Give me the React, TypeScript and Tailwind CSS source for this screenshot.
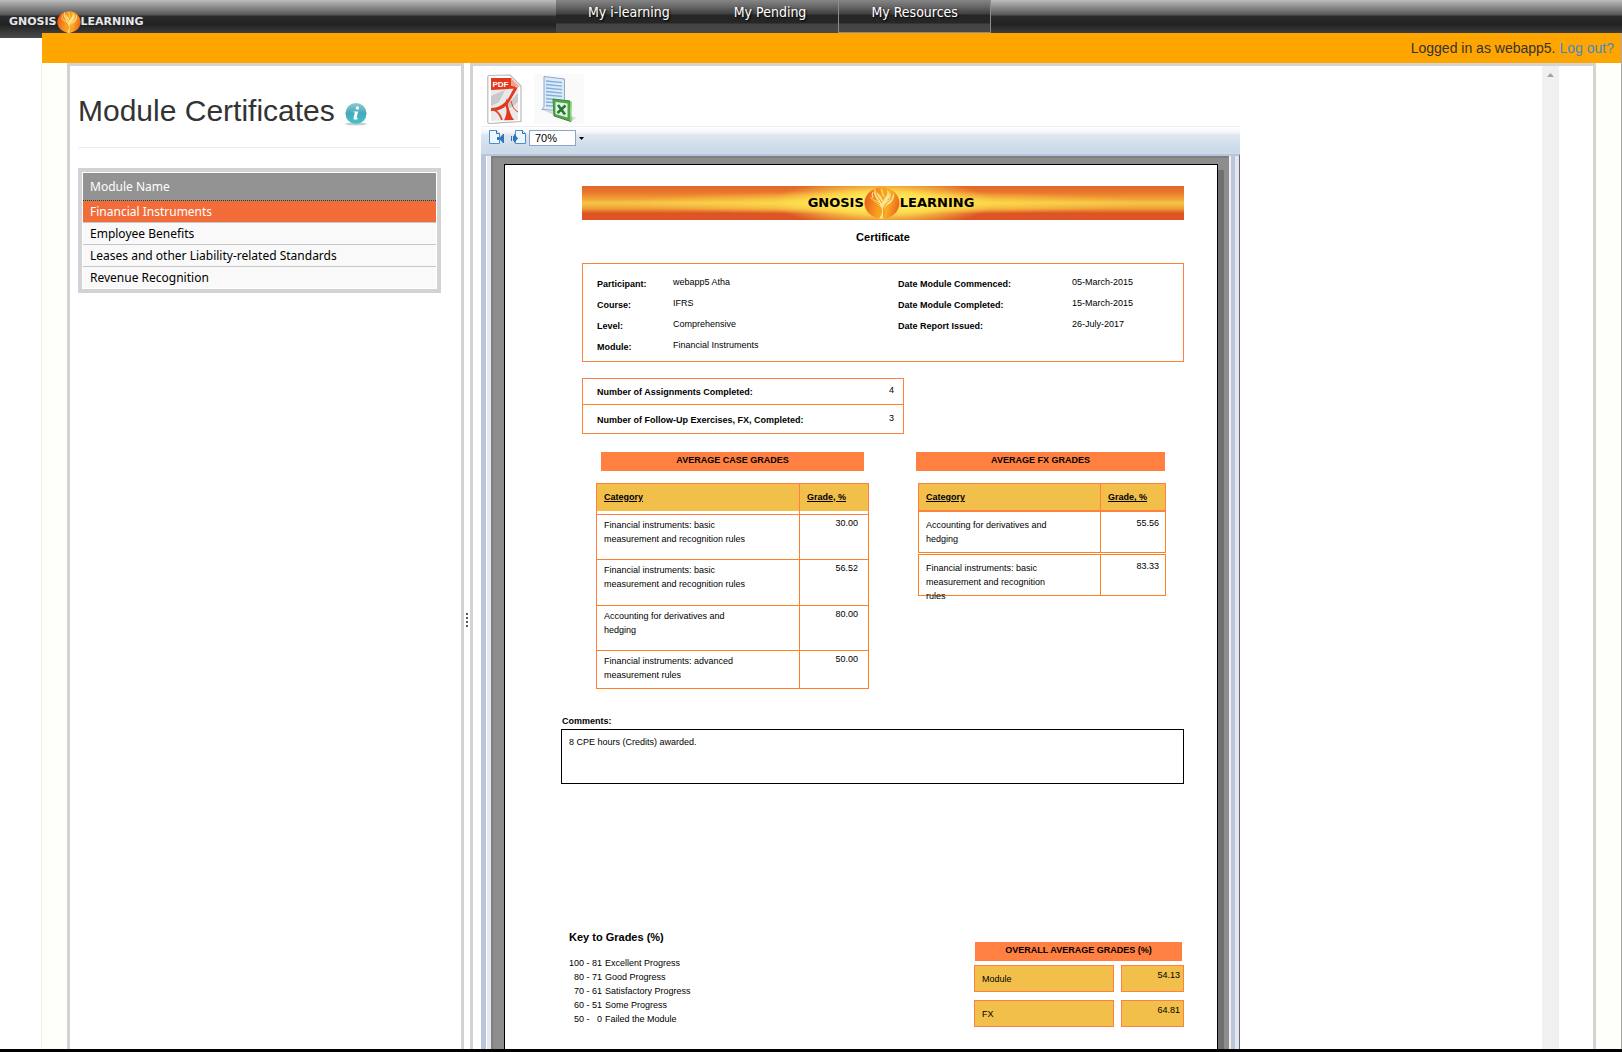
type Row = {
  name: string;
  grade: string;
  className: string;
};

const modules = [
  "Financial Instruments",
  "Employee Benefits",
  "Leases and other Liability-related Standards",
  "Revenue Recognition",
];

const tabs = [
  { name: "My i-learning", active: false },
  { name: "My Pending", active: false },
  { name: "My Resources", active: true },
];

const details = [
  ["Participant:", "webapp5 Atha"],
  ["Course:", "IFRS"],
  ["Level:", "Comprehensive"],
  ["Module:", "Financial Instruments"],
];

const dates = [
  ["Date Module Commenced:", "05-March-2015"],
  ["Date Module Completed:", "15-March-2015"],
  ["Date Report Issued:", "26-July-2017"],
];

const caseGrades: Row[] = [
  {
    name: "Financial instruments: basic measurement and recognition rules",
    grade: "30.00",
    className: "h-[45px]",
  },
  {
    name: "Financial instruments: basic measurement and recognition rules",
    grade: "56.52",
    className: "h-[46px]",
  },
  {
    name: "Accounting for derivatives and hedging",
    grade: "80.00",
    className: "h-[45px]",
  },
  {
    name: "Financial instruments: advanced measurement rules",
    grade: "50.00",
    className: "h-[38px]",
  },
];

const gradeKey = [
  ["100 - 81", "Excellent Progress"],
  ["80 - 71", "Good Progress"],
  ["70 - 61", "Satisfactory Progress"],
  ["60 - 51", "Some Progress"],
  ["50 -\u00a0\u00a0 0", "Failed the Module"],
];

const overall = [
  ["Module", "54.13"],
  ["FX", "64.81"],
];

function Flame({ className }: { className: string }) {
  return (
    <svg
      viewBox="0 0 36 32"
      preserveAspectRatio="none"
      aria-hidden="true"
      className={className}
    >
      <defs>
        <linearGradient id="ball" x1="0" y1="0.3" x2="1" y2="0.5">
          <stop offset="0" stopColor="#ec5a1c" />
          <stop offset="0.45" stopColor="#f7a01e" />
          <stop offset="0.7" stopColor="#f8ab22" />
          <stop offset="1" stopColor="#ee641d" />
        </linearGradient>
      </defs>
      <ellipse cx="18" cy="16" rx="17.5" ry="15.5" fill="url(#ball)" />
      <path
        d="M15 31.500c4-5 4-9 1-13-3-3-8-4-10-9 3 3 6 4 9 5-4-4-6-8-4-13 1 5 7 6 8 13 1-4 6-6 4-12 4 4 3 8 0 11 4-1 6-4 7-8 1 6-2 10-6 12-5 3-5 8-4 14Z"
        fill="#fbe58c"
      />
      <path
        d="M19 31c2-6-1-9 2-13 2-3 5-4 7-7M12 4c0 5 4 8 6 12M8 12c3 3 6 3 8 5"
        fill="none"
        stroke="#f0921c"
        strokeWidth="1"
      />
      <path
        d="M9 5c-1 2-1 4 0 6M17 2c2 3 1 5 3 8M26 6c1 2 0 4-1 6"
        fill="none"
        stroke="#fbd873"
        strokeWidth="1.300"
      />
    </svg>
  );
}

function InfoIcon() {
  return (
    <svg viewBox="0 0 24 24" aria-hidden="true" className="mt-[6px] h-6 w-6">
      <defs>
        <linearGradient id="info" x1="0" y1="0" x2="0" y2="1">
          <stop offset="0" stopColor="#8fc9d3" />
          <stop offset="0.5" stopColor="#46a9bb" />
          <stop offset="1" stopColor="#45c3cf" />
        </linearGradient>
      </defs>
      <ellipse cx="12" cy="22" rx="11" ry="1.4" fill="#c9cccc" />
      <circle cx="12" cy="11.5" r="10.5" fill="url(#info)" />
      <circle cx="13.4" cy="6" r="1.7" fill="#fff" />
      <path
        d="M9.6 9.4h4.6l-1.6 6.4c-.1.6.5.6 1.4.2l-.3 1c-2 1.200-4.600 1.100-4.200-.9l1.300-5.300c.1-.5-.5-.5-1.400-.5Z"
        fill="#fff"
      />
    </svg>
  );
}

function PdfIcon() {
  return (
    <svg viewBox="0 0 35 50" aria-hidden="true" className="h-[50px] w-[35px]">
      <path
        d="M2 1.500 23 1 34 12v35.500L2 49.500Q.8 49.500.8 48V3Q.8 1.500 2 1.500Z"
        fill="#fff"
        stroke="#b9b9b9"
        strokeWidth="1.200"
      />
      <path d="M4 15h27v31L4 47Z" fill="#e9e9e9" />
      <path d="M4 4h20.500v5L30 14.500 4 16Z" fill="#e2391c" />
      <path d="M24 4 33 13l-9-1Z" fill="#f3a08c" />
      <path d="M21 30 31 19v9l-8 6ZM4 22l14-6-6 12-8 4Z" fill="#c9c9c9" />
      <path
        d="M4 34c7 0 12-3 17-9l6-11 4-1-7 12c-5 9-11 12-20 12Z"
        fill="#e2391c"
      />
      <path d="M20 24c1 9 3 17 7 22l-10 .3c2-4 4-9 1-16Z" fill="#e2391c" />
      <path
        d="M4 35c5 .5 9 5 11 11"
        fill="none"
        stroke="#d94a35"
        strokeWidth="1.800"
      />
      <path d="M24 27c2 8 4 9 7 11" fill="none" stroke="#e2391c" />
      <text
        x="5.500"
        y="12.500"
        fill="#fff"
        className="font-['Liberation_Sans'] text-[8px] font-bold"
      >
        PDF
      </text>
    </svg>
  );
}

function ExcelIcon() {
  return (
    <svg viewBox="0 0 50 50" aria-hidden="true" className="h-[50px] w-[50px]">
      <rect width="50" height="50" fill="#fafafa" />
      <path d="m9 36 27 12 6-4-12-5Z" fill="#d5d7d8" />
      <path d="M10 2.500 30.500 5v32L8 35.500l2-3Z" fill="#dce9f6" stroke="#8fa8c8" />
      <path
        d="m12 7 16 1.600M12 10.500l16 1.600M12 14l16 1.600M12 17.500l16 1.600M12 21l16 1.400M12 24.500l8 .8M12 28l7 .6M12 31.500l7 .6"
        stroke="#7fb0dc"
        strokeWidth="1.300"
      />
      <path d="m19 25 17 2 1 20.500L20 42Z" fill="#4ea648" stroke="#378a35" />
      <path d="m36 27 2 1-1 19.500-1-.5Z" fill="#8ed07c" />
      <path d="m21.500 28 12 1.500v14l-12-3.500Z" fill="#e8f3e4" />
      <path
        d="m24 31 7 9.500M31.500 31.500 23.500 39"
        stroke="#237a35"
        strokeWidth="2.600"
      />
    </svg>
  );
}

function PageIcon({ back }: { back?: boolean }) {
  return (
    <svg viewBox="0 0 16 14" aria-hidden="true" className="h-[14px] w-4">
      {back ? (
        <>
          <path d="M4.500.500h7l3 3v10h-10Z" fill="#eef6fd" stroke="#4a90c8" />
          <path d="M11.500.500v3h3" fill="#fff" stroke="#2f6ea8" />
          <path d="M0 6h1v5H0ZM2 6h1V3.500L7 8.500 3 13v-2H2Z" fill="#2f76b8" />
        </>
      ) : (
        <>
          <path d="M.500.500h7l3 3v10H.500Z" fill="#eef6fd" stroke="#4a90c8" />
          <path d="M7.500.500v3h3" fill="#fff" stroke="#2f6ea8" />
          <path d="M14 4h1v9h-1l-4-4.500ZM8 7h2v3H8Z" fill="#2f76b8" />
        </>
      )}
    </svg>
  );
}

function BarTitle({ children }: { children: string }) {
  return (
    <h3 className="h-[19px] bg-[#ff8040] pt-px text-center font-bold">
      {children}
    </h3>
  );
}

function Header() {
  return (
    <header className="flex h-[38px] items-start bg-[linear-gradient(to_bottom,#bcbcbc_0px,#8d8d8d_7px,#565656_15px,#2c2c2c_16px,#222222_25px,#3a3a3a_32px,#4b4b4b_38px)]">
      <a
        href="#home"
        className="flex h-[43px] w-[556px] shrink-0 items-center pl-[9px] font-['DejaVu_Sans'] text-[11px] leading-3 font-bold text-gray-200"
      >
        GNOSIS
        <Flame className="h-[22px] w-6" />
        LEARNING
      </a>
      <nav className="flex h-[33px] bg-[linear-gradient(to_bottom,#868686_0px,#6a6a6a_6px,#3f3f3f_14px,#262626_15px,#262626_23px,#444444_24px,#484848_33px)]">
        {tabs.map((tab) => (
          <a
            key={tab.name}
            href="#tab"
            className={
              tab.active
                ? "border-x border-b border-[#8c8c8c] px-8 pt-[3px] font-['DejaVu_Sans_Condensed'] text-sm leading-[18px] text-white [text-shadow:1px_1px_2px_#000]"
                : "px-8 pt-[3px] font-['DejaVu_Sans_Condensed'] text-sm leading-[18px] text-white [text-shadow:1px_1px_2px_#000]"
            }
          >
            {tab.name}
          </a>
        ))}
      </nav>
    </header>
  );
}

function ModuleList() {
  return (
    <section className="w-[397px] shrink-0 border-3 border-[#d3d3d3] border-b-0 bg-white pr-5 pl-2">
      <div className="flex items-center gap-[9px] border-b border-[#eeeeee] pt-[26px] pb-[18px]">
        <h1 className="text-[30px] leading-[37px] text-[#333333]">
          Module Certificates
        </h1>
        <InfoIcon />
      </div>
      <div className="mt-5 border-4 border-[#d3d3d3] p-px">
        <table className="w-full border-separate border-spacing-0 text-left font-['Noto_Sans',sans-serif] text-xs leading-4">
          <thead>
            <tr>
              <th className="h-7 border-b border-dotted border-[#333333] bg-[#939393] px-[7px] font-normal text-white">
                Module Name
              </th>
            </tr>
          </thead>
          <tbody>
            {modules.map((name, i) => (
              <tr key={name}>
                <td
                  className={
                    i === 0
                      ? "h-[22px] border-b border-[#c6c6c6] bg-[#f26c3a] px-[7px] text-white"
                      : i === modules.length - 1
                        ? "h-[21px] bg-[#f9f9f9] px-[7px] text-black"
                        : "h-[22px] border-b border-[#c6c6c6] bg-[#f9f9f9] px-[7px] text-black"
                  }
                >
                  {name}
                </td>
              </tr>
            ))}
          </tbody>
        </table>
      </div>
    </section>
  );
}

function Toolbar() {
  return (
    <div>
      <div className="flex gap-3 pt-2 pb-[2px] pl-[6px]">
        <button type="button" aria-label="Export to PDF">
          <PdfIcon />
        </button>
        <button type="button" aria-label="Export to Excel">
          <ExcelIcon />
        </button>
      </div>
      <div className="flex h-7 items-start border-t border-[#eeeff5] bg-[linear-gradient(to_bottom,#ffffff,#f1f4f8_6px,#dfe6f1_8px,#ccdaea_22px)] pt-[3px] pl-2">
        <button type="button" aria-label="Next page" className="mr-[6px]">
          <PageIcon />
        </button>
        <button type="button" aria-label="Previous page" className="mr-[2px]">
          <PageIcon back />
        </button>
        <input
          type="text"
          aria-label="Zoom"
          defaultValue="70%"
          className="h-4 w-[47px] border border-[#8fa3c8] bg-white pl-[5px] text-[11px] leading-[14px] text-black"
        />
        <svg
          viewBox="0 0 5 3"
          aria-hidden="true"
          className="mt-[7px] ml-[3px] h-[3px] w-[5px]"
        >
          <path d="M0 0h5L2.500 3Z" />
        </svg>
      </div>
    </div>
  );
}

function CaseTable() {
  return (
    <table className="mt-3 -ml-[5px] w-[273px] table-fixed border-separate border-spacing-0 border-t border-l border-[#ff8040] text-left">
      <thead>
        <tr>
          <th className="h-[27px] w-[203px] border-r border-[#ff8040] bg-[#f2bf4b] px-[7px] pb-[2px] underline">
            Category
          </th>
          <th className="h-[27px] border-r border-[#ff8040] bg-[#f2bf4b] px-[7px] pb-[2px] underline">
            Grade, %
          </th>
        </tr>
      </thead>
      <tbody>
        <tr>
          <td className="h-1 border-r border-b border-[#ff8040]" />
          <td className="h-1 border-r border-b border-[#ff8040]" />
        </tr>
        {caseGrades.map((row) => (
          <tr key={row.grade} className={row.className}>
            <td className="border-r border-b border-[#ff8020] pt-[3px] pr-11 pl-[7px] align-top">
              {row.name}
            </td>
            <td className="border-r border-b border-[#ff8020] pt-px pr-[10px] text-right align-top">
              {row.grade}
            </td>
          </tr>
        ))}
      </tbody>
    </table>
  );
}

function FxTable() {
  return (
    <table className="mt-3 ml-[2px] w-[248px] table-fixed border-separate border-spacing-0 text-left">
      <thead>
        <tr>
          <th className="h-[29px] w-[183px] border border-b-2 border-[#ff8040] bg-[#f2bf4b] px-[7px] underline">
            Category
          </th>
          <th className="h-[29px] border-t border-r border-b-2 border-[#ff8040] bg-[#f2bf4b] px-[7px] underline">
            Grade, %
          </th>
        </tr>
      </thead>
      <tbody>
        <tr className="h-[41px]">
          <td className="border-x border-b border-[#ff8020] pt-[6px] pr-11 pl-[7px] align-top">
            Accounting for derivatives and hedging
          </td>
          <td className="border-r border-b border-[#ff8020] pt-1 pr-[6px] text-right align-top">
            55.56
          </td>
        </tr>
        <tr className="h-px">
          <td className="p-0" />
          <td className="p-0" />
        </tr>
        <tr>
          <td className="border border-[#ff8020] pt-[6px] pr-11 pl-[7px] align-top">
            <div className="h-[34px]">
              Financial instruments: basic measurement and recognition rules
            </div>
          </td>
          <td className="border-y border-r border-[#ff8020] pt-1 pr-[6px] text-right align-top">
            83.33
          </td>
        </tr>
      </tbody>
    </table>
  );
}

function Certificate() {
  return (
    <article className="min-h-full w-[714px] border-x border-t border-black bg-white pt-[21px] pr-[33px] pb-1 pl-14 text-[9px] leading-[14px] text-black shadow-[6px_6px_0_#707070]">
      <div className="ml-[21px]">
        <div className="flex h-[34px] items-center justify-center bg-[radial-gradient(ellipse_110px_24px_at_center,#fff26a_0%,rgba(255,228,80,0.85)_50%,rgba(255,190,50,0)_100%),radial-gradient(ellipse_260px_12px_at_center,rgba(255,230,80,0.9)_0%,rgba(255,200,60,0)_100%),linear-gradient(to_bottom,#e2662a_0%,#e8762c_18%,#f2a136_38%,#f6c646_50%,#f0a038_66%,#dd5524_80%,#dc5426_100%)] pl-4 font-['DejaVu_Sans'] text-[13px] font-bold">
          GNOSIS
          <Flame className="h-8 w-9" />
          LEARNING
        </div>
        <h2 className="mt-[10px] text-center text-[11px] font-bold">
          Certificate
        </h2>

        <div className="mt-[19px] flex border border-[#ff8040] px-[14px] pt-[11px] pb-[2px]">
          <dl className="w-[301px]">
            {details.map(([label, value]) => (
              <div key={label} className="flex h-[21px]">
                <dt className="w-[76px] pt-[2px] font-bold">{label}</dt>
                <dd>{value}</dd>
              </div>
            ))}
          </dl>
          <dl>
            {dates.map(([label, value]) => (
              <div key={label} className="flex h-[21px]">
                <dt className="w-[174px] pt-[2px] font-bold">{label}</dt>
                <dd>{value}</dd>
              </div>
            ))}
          </dl>
        </div>

        <dl className="mt-4 w-[322px] border border-[#ff8040]">
          <div className="flex h-[26px] justify-between border-b border-[#ff8020] pt-1 pr-[9px] pl-[14px]">
            <dt className="pt-[2px] font-bold">
              Number of Assignments Completed:
            </dt>
            <dd>4</dd>
          </div>
          <div className="flex h-7 justify-between pt-[6px] pr-[9px] pl-[14px]">
            <dt className="pt-[2px] font-bold">
              Number of Follow-Up Exercises, FX, Completed:
            </dt>
            <dd>3</dd>
          </div>
        </dl>

        <div className="mt-[18px] flex gap-[52px] pr-[19px] pl-[19px]">
          <div className="w-[263px]">
            <BarTitle>AVERAGE CASE GRADES</BarTitle>
            <CaseTable />
          </div>
          <div className="w-[249px]">
            <BarTitle>AVERAGE FX GRADES</BarTitle>
            <FxTable />
          </div>
        </div>
      </div>

      <h3 className="mt-[25px] pb-px pl-px font-bold">Comments:</h3>
      <div className="h-[55px] border border-black px-[7px] pt-[5px]">
        8 CPE hours (Credits) awarded.
      </div>

      <div className="mt-[146px] flex items-start justify-between pl-2">
        <div>
          <h3 className="text-[11px] font-bold">Key to Grades (%)</h3>
          <table className="mt-3 border-separate border-spacing-0">
            <tbody>
              {gradeKey.map(([range, label]) => (
                <tr key={range}>
                  <td className="p-0 text-right">{range}</td>
                  <td className="py-0 pr-0 pl-[3px]">{label}</td>
                </tr>
              ))}
            </tbody>
          </table>
        </div>
        <div className="mt-3 w-[210px]">
          <div className="mr-[2px] ml-px">
            <BarTitle>OVERALL AVERAGE GRADES (%)</BarTitle>
          </div>
          {overall.map(([label, value]) => (
            <div key={label} className="mt-1 mb-2 flex gap-[7px]">
              <div className="h-[27px] w-[140px] border border-[#ff8040] bg-[#f2bf4b] px-[7px] pt-[6px]">
                {label}
              </div>
              <div className="h-[27px] flex-1 border border-[#ff8040] bg-[#f2bf4b] pt-[2px] pr-[3px] text-right">
                {value}
              </div>
            </div>
          ))}
        </div>
      </div>
    </article>
  );
}

export default function App() {
  return (
    <div className="flex min-h-screen flex-col border-b-3 border-black bg-white font-['Liberation_Sans',Arial,sans-serif]">
      <Header />
      <div className="relative -mt-[5px] ml-[41px] flex flex-1 flex-col border-r border-[#a8a8a8]">
        <div className="ml-px flex h-[30px] items-center justify-end gap-1 bg-[#ffa500] pr-[7px] text-sm text-[#333333]">
          <span>Logged in as webapp5.</span>
          <a href="#logout" className="text-[#428bca]">
            Log out?
          </a>
        </div>
        <main className="flex flex-1 border-l border-[#eeeeee] bg-[#fffffa] px-[25px]">
          <ModuleList />
          <div className="flex w-[6px] shrink-0 items-center justify-center bg-white">
            <svg
              viewBox="0 0 2 14"
              aria-hidden="true"
              className="mt-32 h-[14px] w-[2px]"
            >
              <path
                d="M0 0h2v2H0ZM0 4h2v2H0ZM0 8h2v2H0ZM0 12h2v2H0Z"
                fill="#5c5c5c"
              />
            </svg>
          </div>
          <section className="flex min-w-0 flex-1 border-3 border-b-0 border-[#d3d3d3] bg-white pr-[34px] pl-2">
            <div className="flex w-[759px] flex-col">
              <Toolbar />
              <div className="flex flex-1 border-t-2 border-r border-l-5 border-t-[#b9c5da] border-r-[#66667f] border-l-[#b9c5da]">
                <div className="w-[5px] border-l border-white bg-[#e8e8f0]" />
                <div className="flex w-[738px] overflow-hidden border-t-2 border-l-2 border-[#7f7f7f] bg-[#8d8d8d] pt-[6px] pl-[11px]">
                  <Certificate />
                </div>
                <div className="w-[2px] bg-[#f0f0f0]" />
                <div className="w-1 bg-[#bbc6da]" />
                <div className="w-1 bg-[#e6e6ee]" />
              </div>
            </div>
            <div className="ml-auto flex w-[17px] justify-center bg-[#f0f0f0] pt-[7px]">
              <svg viewBox="0 0 7 4" aria-hidden="true" className="h-1 w-[7px]">
                <path d="M0 4 3.500 0 7 4Z" fill="#a3a3a3" />
              </svg>
            </div>
          </section>
        </main>
      </div>
    </div>
  );
}
